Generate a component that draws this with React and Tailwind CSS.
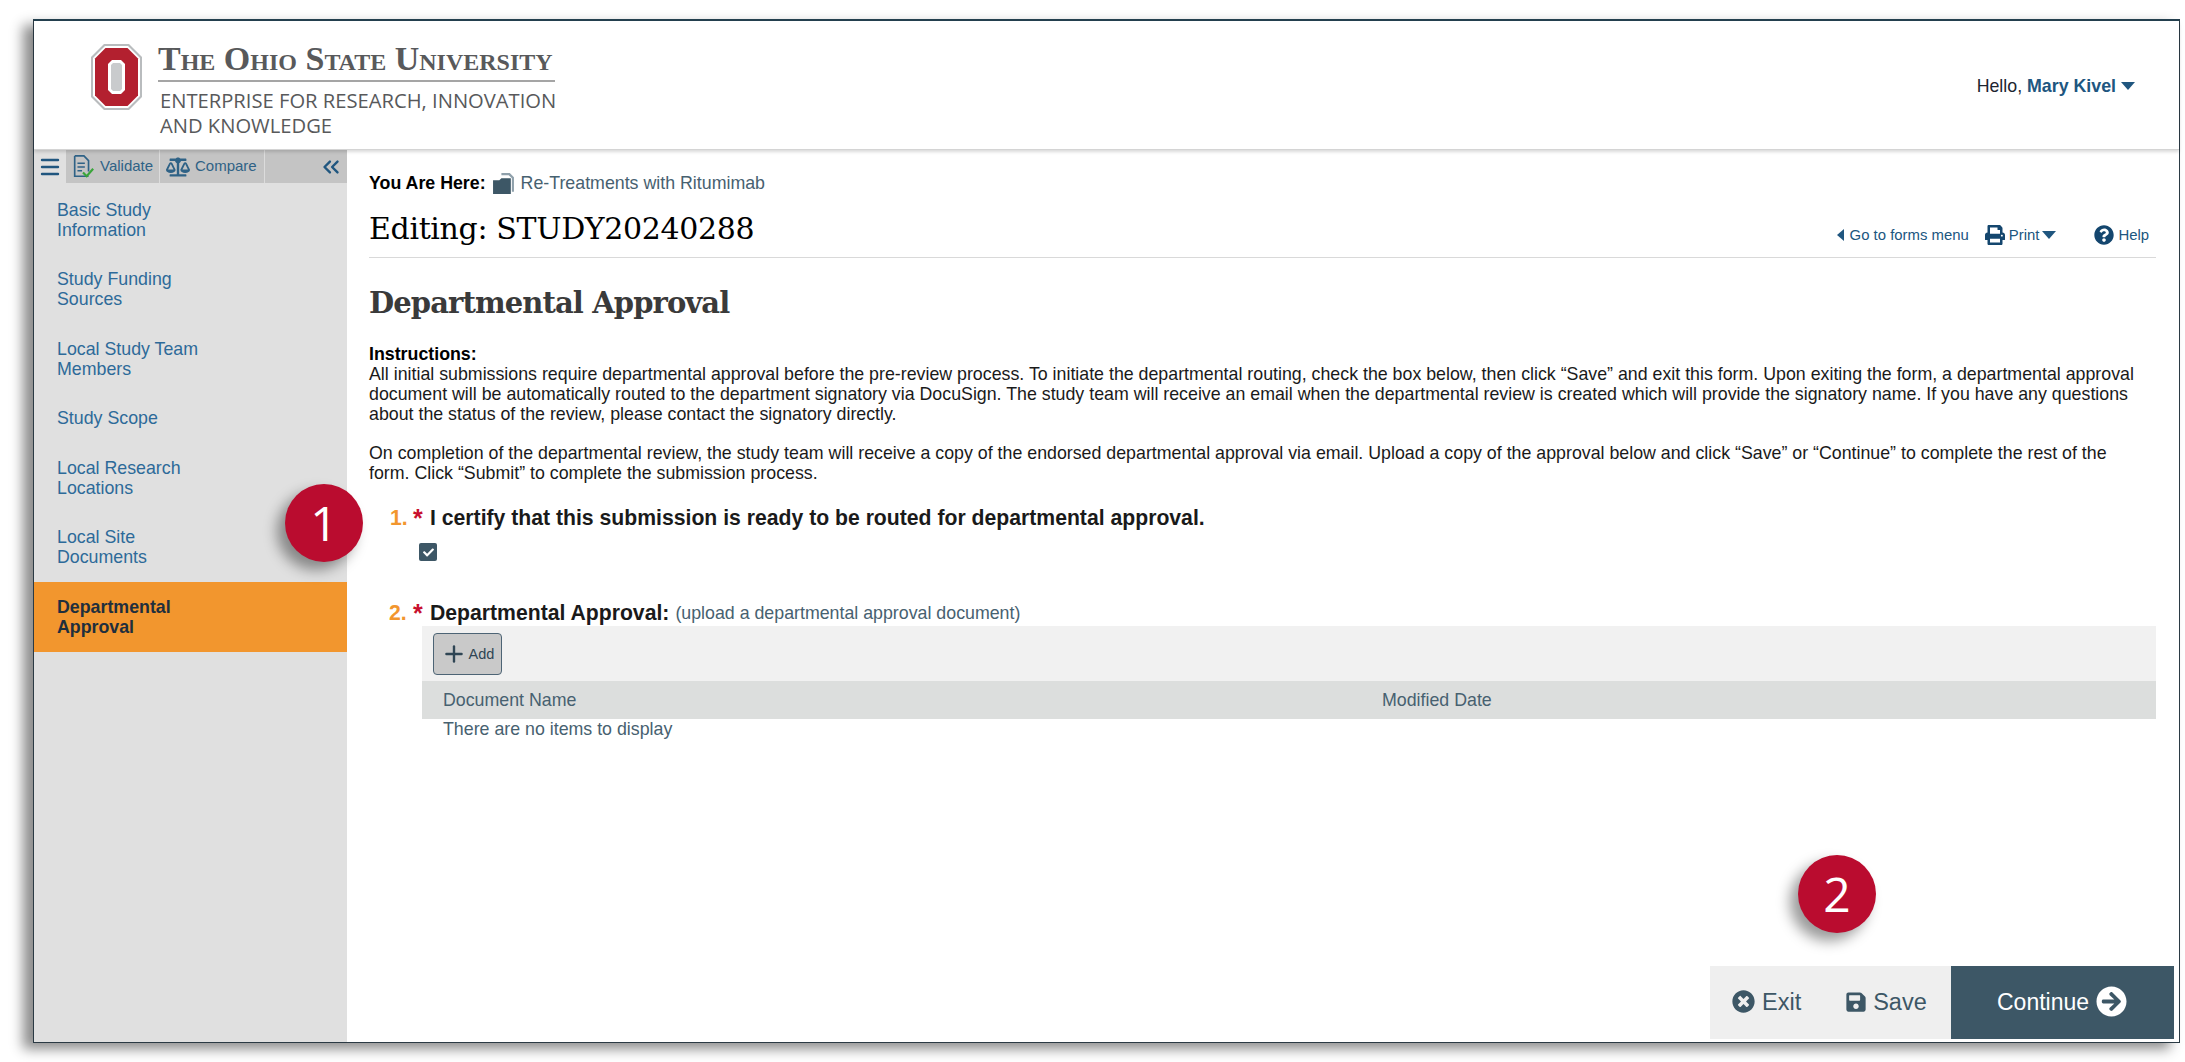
import React from 'react';
import { Menu, Plus, ChevronsLeft } from 'lucide-react';
import {
  FaBalanceScale,
  FaPrint,
  FaQuestionCircle,
  FaTimesCircle,
  FaSave,
  FaArrowCircleRight,
  FaCheck,
} from 'react-icons/fa';

const navItems = [
  { lines: ['Basic Study', 'Information'] },
  { lines: ['Study Funding', 'Sources'] },
  { lines: ['Local Study Team', 'Members'] },
  { lines: ['Study Scope'] },
  { lines: ['Local Research', 'Locations'] },
  { lines: ['Local Site', 'Documents'] },
  { lines: ['Departmental', 'Approval'], active: true },
];

const BlockO = () => (
  <svg viewBox="0 0 53 68" className="w-[53px] h-[68px] shrink-0">
    <path d="M14 1h25l13 13v40L39 67H14L1 54V14z" fill="#b9bcbe" />
    <path d="M15 3h23l12 12v38L38 65H15L3 53V15z" fill="#fff" />
    <path d="M15.5 5h22L48 15.500v37L37.500 63h-22L5 52.500v-37z" fill="#b3202f" />
    <path d="M22 17h9l4 4v26l-4 4h-9l-4-4V21z" fill="#fff" />
    <path d="M23 20h7l2 2v24l-2 2h-7l-2-2V22z" fill="#c9cbcd" />
  </svg>
);

const ValidateIcon = () => (
  <svg viewBox="0 0 24 26" className="w-[24px] h-[24px] shrink-0" fill="none">
    <path d="M3 1h10l5 5v12M18 23H3V1" stroke="#2f6286" strokeWidth="1.800" />
    <path d="M6 9h8M6 13h8M6 17h5" stroke="#2f6286" strokeWidth="1.500" />
    <path d="M12 19l4 4 7-8" stroke="#3aa53a" strokeWidth="2.400" />
  </svg>
);

const FormIcon = () => (
  <svg viewBox="0 0 22 22" className="w-[23px] h-[23px] shrink-0">
    <path d="M9 1h8l4 4v14h-2V6l-3-3H9z" fill="#8fa0ab" />
    <path d="M1 8h6l2-2h9v15H1z" fill="#3d5766" />
  </svg>
);

const CaretDown = ({ className }) => (
  <svg viewBox="0 0 14 8" className={`w-[14px] h-[8px] shrink-0 ${className}`} fill="currentColor">
    <path d="M0 0h14L7 8z" />
  </svg>
);

const CaretLeft = ({ className }) => (
  <svg viewBox="0 0 7 12" className={`w-[7px] h-[12px] shrink-0 ${className}`} fill="currentColor">
    <path d="M7 0v12L0 6z" />
  </svg>
);

const Badge = ({ n, className }) => (
  <div
    className={`absolute w-[78px] h-[78px] rounded-full bg-[#ba0c2f] text-white flex items-center justify-center text-[48px] font-medium shadow-[-8px_8px_14px_rgba(0,0,0,0.4)] font-['Open_Sans',sans-serif] ${className}`}
  >
    {n}
  </div>
);

export default function App() {
  return (
    <div className="relative w-[2185px] h-[1062px] bg-white overflow-hidden font-['Liberation_Sans',Arial,sans-serif] pt-[19px] pl-[33px]">
      <div className="w-[2147px] h-[1024px] flex flex-col bg-white border border-[#2b3a44] border-t-[2px] border-t-[#24404f] shadow-[-10px_6px_12px_rgba(0,0,0,0.45)]">
        <header className="h-[129px] shrink-0 flex items-start justify-between pl-[56px] pr-[44px] border-b border-[#d4d4d4] shadow-[0_2px_3px_rgba(0,0,0,0.15)] relative z-10 bg-white">
          <div className="flex gap-[15px] pt-[22px]">
            <BlockO />
            <div className="w-[397px] text-[#58595b]">
              <div className="border-b-2 border-[#a5a5a5] pb-[5px] text-[34px] leading-[32px] font-semibold font-['Liberation_Serif',serif] [font-variant:small-caps] whitespace-nowrap">
                The Ohio State University
              </div>
              <div className="text-[20.200px] leading-[25px] font-['Open_Sans',sans-serif] pt-[6px] pl-[2px] whitespace-nowrap">
                ENTERPRISE FOR RESEARCH, INNOVATION
                <br />
                AND KNOWLEDGE
              </div>
            </div>
          </div>
          <div className="pt-[55px] text-[17.800px] leading-[20px] text-[#1c2530] flex items-center whitespace-nowrap">
            Hello,&nbsp;<span className="font-bold text-[#20567f]">Mary Kivel</span>
            <CaretDown className="ml-[5px] text-[#20567f]" />
          </div>
        </header>

        <div className="flex-1 flex min-h-0">
          <aside className="w-[313px] shrink-0 bg-[#e0e0e0] flex flex-col">
            <div className="h-[33px] flex items-stretch bg-white">
              <div className="w-[32px] flex items-center justify-center bg-[#e0e0e0]">
                <Menu size={24} strokeWidth={2.400} className="text-[#20567f]" />
              </div>
              <div className="flex-1 flex bg-[#c4c4c4] text-[#2f6286] text-[15px]">
                <div className="w-[94px] flex items-center gap-[5px] pl-[5px] border-r border-[#dcdcdc]">
                  <ValidateIcon />
                  Validate
                </div>
                <div className="w-[105px] flex items-center gap-[5px] pl-[6px] border-r border-[#dcdcdc]">
                  <FaBalanceScale className="text-[24px] shrink-0" />
                  Compare
                </div>
                <div className="flex-1 flex items-center justify-end pr-[3px]">
                  <ChevronsLeft size={26} strokeWidth={2.200} className="text-[#20567f]" />
                </div>
              </div>
            </div>
            <nav className="pt-[2px]">
              {navItems.map((item) => (
                <div
                  key={item.lines[0]}
                  className={`px-[23px] py-[14.750px] text-[17.800px] leading-[20px] ${
                    item.active ? 'bg-[#f2962e] font-bold text-[#1f2f3d]' : 'text-[#2d6a99]'
                  }`}
                >
                  {item.lines.map((line) => (
                    <div key={line}>{line}</div>
                  ))}
                </div>
              ))}
            </nav>
          </aside>

          <main className="flex-1 min-w-0 flex flex-col pl-[22px] pr-[23px] pt-[23px] text-[17.800px] leading-[20px] text-[#1a1a1a]">
            <div className="flex items-center h-[20px] whitespace-nowrap">
              <span className="font-bold text-black">You Are Here:</span>
              <span className="ml-[6px] mr-[6px]">
                <FormIcon />
              </span>
              <span className="text-[#476170]">Re-Treatments with Ritumimab</span>
            </div>

            <div className="flex items-end justify-between border-b border-[#d9d9d9] h-[64px] pb-[8px] mt-[1px]">
              <h1 className="text-[30px] leading-[40px] text-black font-['DejaVu_Serif',serif] tracking-[-0.35px] whitespace-nowrap">
                Editing: STUDY20240288
              </h1>
              <div className="flex items-center text-[#20567f] text-[14.900px] whitespace-nowrap h-[26px] mr-[7px] mb-[1px]">
                <CaretLeft className="mr-[6px]" />
                Go to forms menu
                <FaPrint className="text-[20px] ml-[16px] mr-[4px] text-[#14466e]" />
                Print
                <CaretDown className="ml-[3px]" />
                <FaQuestionCircle className="text-[20px] ml-[38px] mr-[4px] text-[#14466e]" />
                Help
              </div>
            </div>

            <h2 className="mt-[26px] text-[29px] leading-[38px] font-bold text-[#3a3a3a] font-['DejaVu_Serif',serif] tracking-[-0.9px] whitespace-nowrap">
              Departmental Approval
            </h2>

            <div className="mt-[23px] max-w-[1773px]">
              <div className="font-bold text-black leading-[19px]">Instructions:</div>
              <p>
                All initial submissions require departmental approval before the pre-review process. To initiate the departmental routing, check the box below, then click “Save” and exit this form. Upon exiting the form, a departmental approval document will be automatically routed to the department signatory via DocuSign. The study team will receive an email when the departmental review is created which will provide the signatory name. If you have any questions about the status of the review, please contact the signatory directly.
              </p>
              <p className="mt-[19px]">
                On completion of the departmental review, the study team will receive a copy of the endorsed departmental approval via email. Upload a copy of the approval below and click “Save” or “Continue” to complete the rest of the form. Click “Submit” to complete the submission process.
              </p>
            </div>

            <div className="mt-[23px] flex items-center h-[24px] pl-[21px] font-bold text-[21.200px] whitespace-nowrap">
              <span className="text-[#f2962e] w-[23px]">1.</span>
              <span className="text-[#c8102e] w-[17px] text-[25px]">*</span>
              <span className="text-[#1a1a1a]">I certify that this submission is ready to be routed for departmental approval.</span>
            </div>
            <div className="mt-[13px] ml-[50px] w-[18px] h-[18px] rounded-[2px] bg-[#3d5766] flex items-center justify-center text-white text-[11px]">
              <FaCheck />
            </div>

            <div className="mt-[40px] flex items-center h-[24px] pl-[20px] whitespace-nowrap">
              <span className="font-bold text-[21.200px] text-[#f2962e] w-[24px]">2.</span>
              <span className="font-bold text-[25px] text-[#c8102e] w-[17px]">*</span>
              <span className="font-bold text-[21.200px] text-[#1a1a1a]">Departmental Approval:</span>
              <span className="ml-[6px] text-[#476170]">(upload a departmental approval document)</span>
            </div>

            <div className="ml-[53px] mt-[1px] text-[#476170]">
              <div className="h-[55px] bg-[#f1f1f1] flex items-center pl-[11px]">
                <div className="w-[69px] h-[42px] bg-[#c9c9c9] border border-[#4d6475] rounded-[4px] flex items-center justify-center gap-[2px] text-[14.500px] text-[#2f4554]">
                  <Plus size={26} strokeWidth={2.200} />
                  Add
                </div>
              </div>
              <div className="h-[38px] bg-[#dcdedd] flex items-center pl-[21px]">
                <span className="w-[939px]">Document Name</span>
                <span>Modified Date</span>
              </div>
              <div className="pl-[21px] h-[20px]">There are no items to display</div>
            </div>

            <div className="mt-auto mb-[3px] -mr-[18px] self-end flex h-[73px] text-[23.500px] text-[#3d5766]">
              <div className="w-[241px] bg-[#efefef] flex items-center pl-[22px] pb-[2px]">
                <FaTimesCircle className="text-[23px] mr-[7px]" />
                Exit
                <FaSave className="text-[22px] ml-[44px] mr-[6px]" />
                Save
              </div>
              <div className="w-[223px] bg-[#3d5766] text-white flex items-center pl-[46px] pb-[2px] text-[23px]">
                Continue
                <FaArrowCircleRight className="text-[31px] ml-[7px]" />
              </div>
            </div>
          </main>
        </div>
      </div>

      <Badge n="1" className="left-[285px] top-[484px]" />
      <Badge n="2" className="left-[1798px] top-[855px]" />
    </div>
  );
}
